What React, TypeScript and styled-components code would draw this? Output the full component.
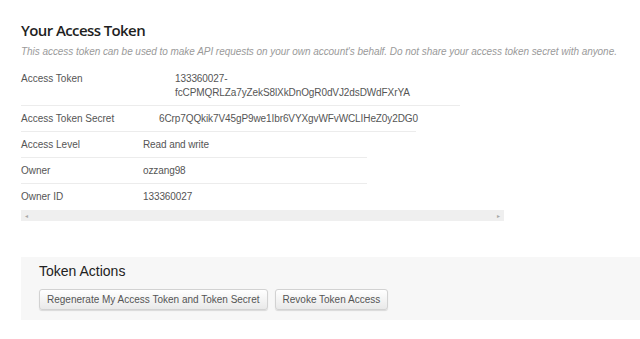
import React from 'react';
import styled, { createGlobalStyle } from 'styled-components';

interface Detail {
  label: string;
  value: string[];
  labelWidth: number;
  rowWidth: number;
}

const details: Detail[] = [
  { label: 'Access Token', value: ['133360027-', 'fcCPMQRLZa7yZekS8lXkDnOgR0dVJ2dsDWdFXrYA'], labelWidth: 154, rowWidth: 439 },
  { label: 'Access Token Secret', value: ['6Crp7QQkik7V45gP9we1Ibr6VYXgvWFvWCLIHeZ0y2DG0'], labelWidth: 138, rowWidth: 395 },
  { label: 'Access Level', value: ['Read and write'], labelWidth: 122, rowWidth: 346 },
  { label: 'Owner', value: ['ozzang98'], labelWidth: 122, rowWidth: 346 },
  { label: 'Owner ID', value: ['133360027'], labelWidth: 122, rowWidth: 346 },
];

const GlobalStyle = createGlobalStyle`
  html, body {
    margin: 0;
    padding: 0;
    background: #fff;
    font-family: "Liberation Sans", Arial, sans-serif;
  }
`;

export default function App() {
  return (
    <>
      <GlobalStyle />
      <Page>
        <Title>Your Access Token</Title>
        <Subtitle>
          This access token can be used to make API requests on your own account's behalf. Do not share your access token secret with anyone.
        </Subtitle>
        <Details>
          {details.map((d, i) => (
            <Row key={d.label} $width={d.rowWidth} $last={i === details.length - 1}>
              <Label $width={d.labelWidth}>{d.label}</Label>
              <Value>
                {d.value.map((line) => (
                  <div key={line}>{line}</div>
                ))}
              </Value>
            </Row>
          ))}
          <Scrollbar>
            <Arrow>◂</Arrow>
            <Arrow>▸</Arrow>
          </Scrollbar>
        </Details>
        <Actions>
          <ActionsTitle>Token Actions</ActionsTitle>
          <ButtonRow>
            <Button>Regenerate My Access Token and Token Secret</Button>
            <Button>Revoke Token Access</Button>
          </ButtonRow>
        </Actions>
      </Page>
    </>
  );
}

const Page = styled.div`
  width: 640px;
  height: 339px;
  overflow: hidden;
  padding: 20px 0 0 21px;
  box-sizing: border-box;
`;

const Title = styled.h2`
  margin: 0;
  font-family: "Open Sans", "Liberation Sans", sans-serif;
  font-weight: 600;
  font-size: 15px;
  line-height: 21px;
  color: #1f1f1f;
  letter-spacing: -0.6px;
`;

const Subtitle = styled.p`
  margin: 4px 0 0;
  font-size: 10px;
  line-height: 14px;
  font-style: italic;
  color: #9a9a9a;
  letter-spacing: -0.05px;
  white-space: nowrap;
`;

const Details = styled.div`
  margin-top: 7px;
  width: 483px;
`;

const Row = styled.div<{ $width: number; $last: boolean }>`
  display: flex;
  width: ${(p) => p.$width}px;
  padding: 6px 0 5px;
  border-bottom: 1px solid ${(p) => (p.$last ? 'transparent' : '#ececec')};
  font-size: 10px;
  line-height: 14px;
  color: #555;
`;

const Label = styled.div<{ $width: number }>`
  flex: 0 0 ${(p) => p.$width}px;
`;

const Value = styled.div`
  white-space: nowrap;
  letter-spacing: -0.1px;
`;

const Scrollbar = styled.div`
  display: flex;
  justify-content: space-between;
  align-items: center;
  height: 11px;
  padding: 0 4px;
  background: #efefef;
`;

const Arrow = styled.span`
  font-size: 6px;
  color: #a8a8a8;
`;

const Actions = styled.div`
  margin-top: 36px;
  background: #f7f7f7;
  padding: 4px 18px 10px;
`;

const ActionsTitle = styled.h3`
  margin: 0;
  font-weight: normal;
  font-size: 14px;
  line-height: 20px;
  color: #222;
`;

const ButtonRow = styled.div`
  display: flex;
  gap: 7px;
  margin-top: 8px;
`;

const Button = styled.button`
  height: 21px;
  padding: 0 7px;
  font-family: "Liberation Sans", Arial, sans-serif;
  font-size: 10px;
  color: #555;
  background: linear-gradient(#ffffff, #e9e9e9);
  border: 1px solid #d2d2d2;
  border-radius: 3px;
  box-shadow: 0 1px 1px rgba(0, 0, 0, 0.12);
`;
